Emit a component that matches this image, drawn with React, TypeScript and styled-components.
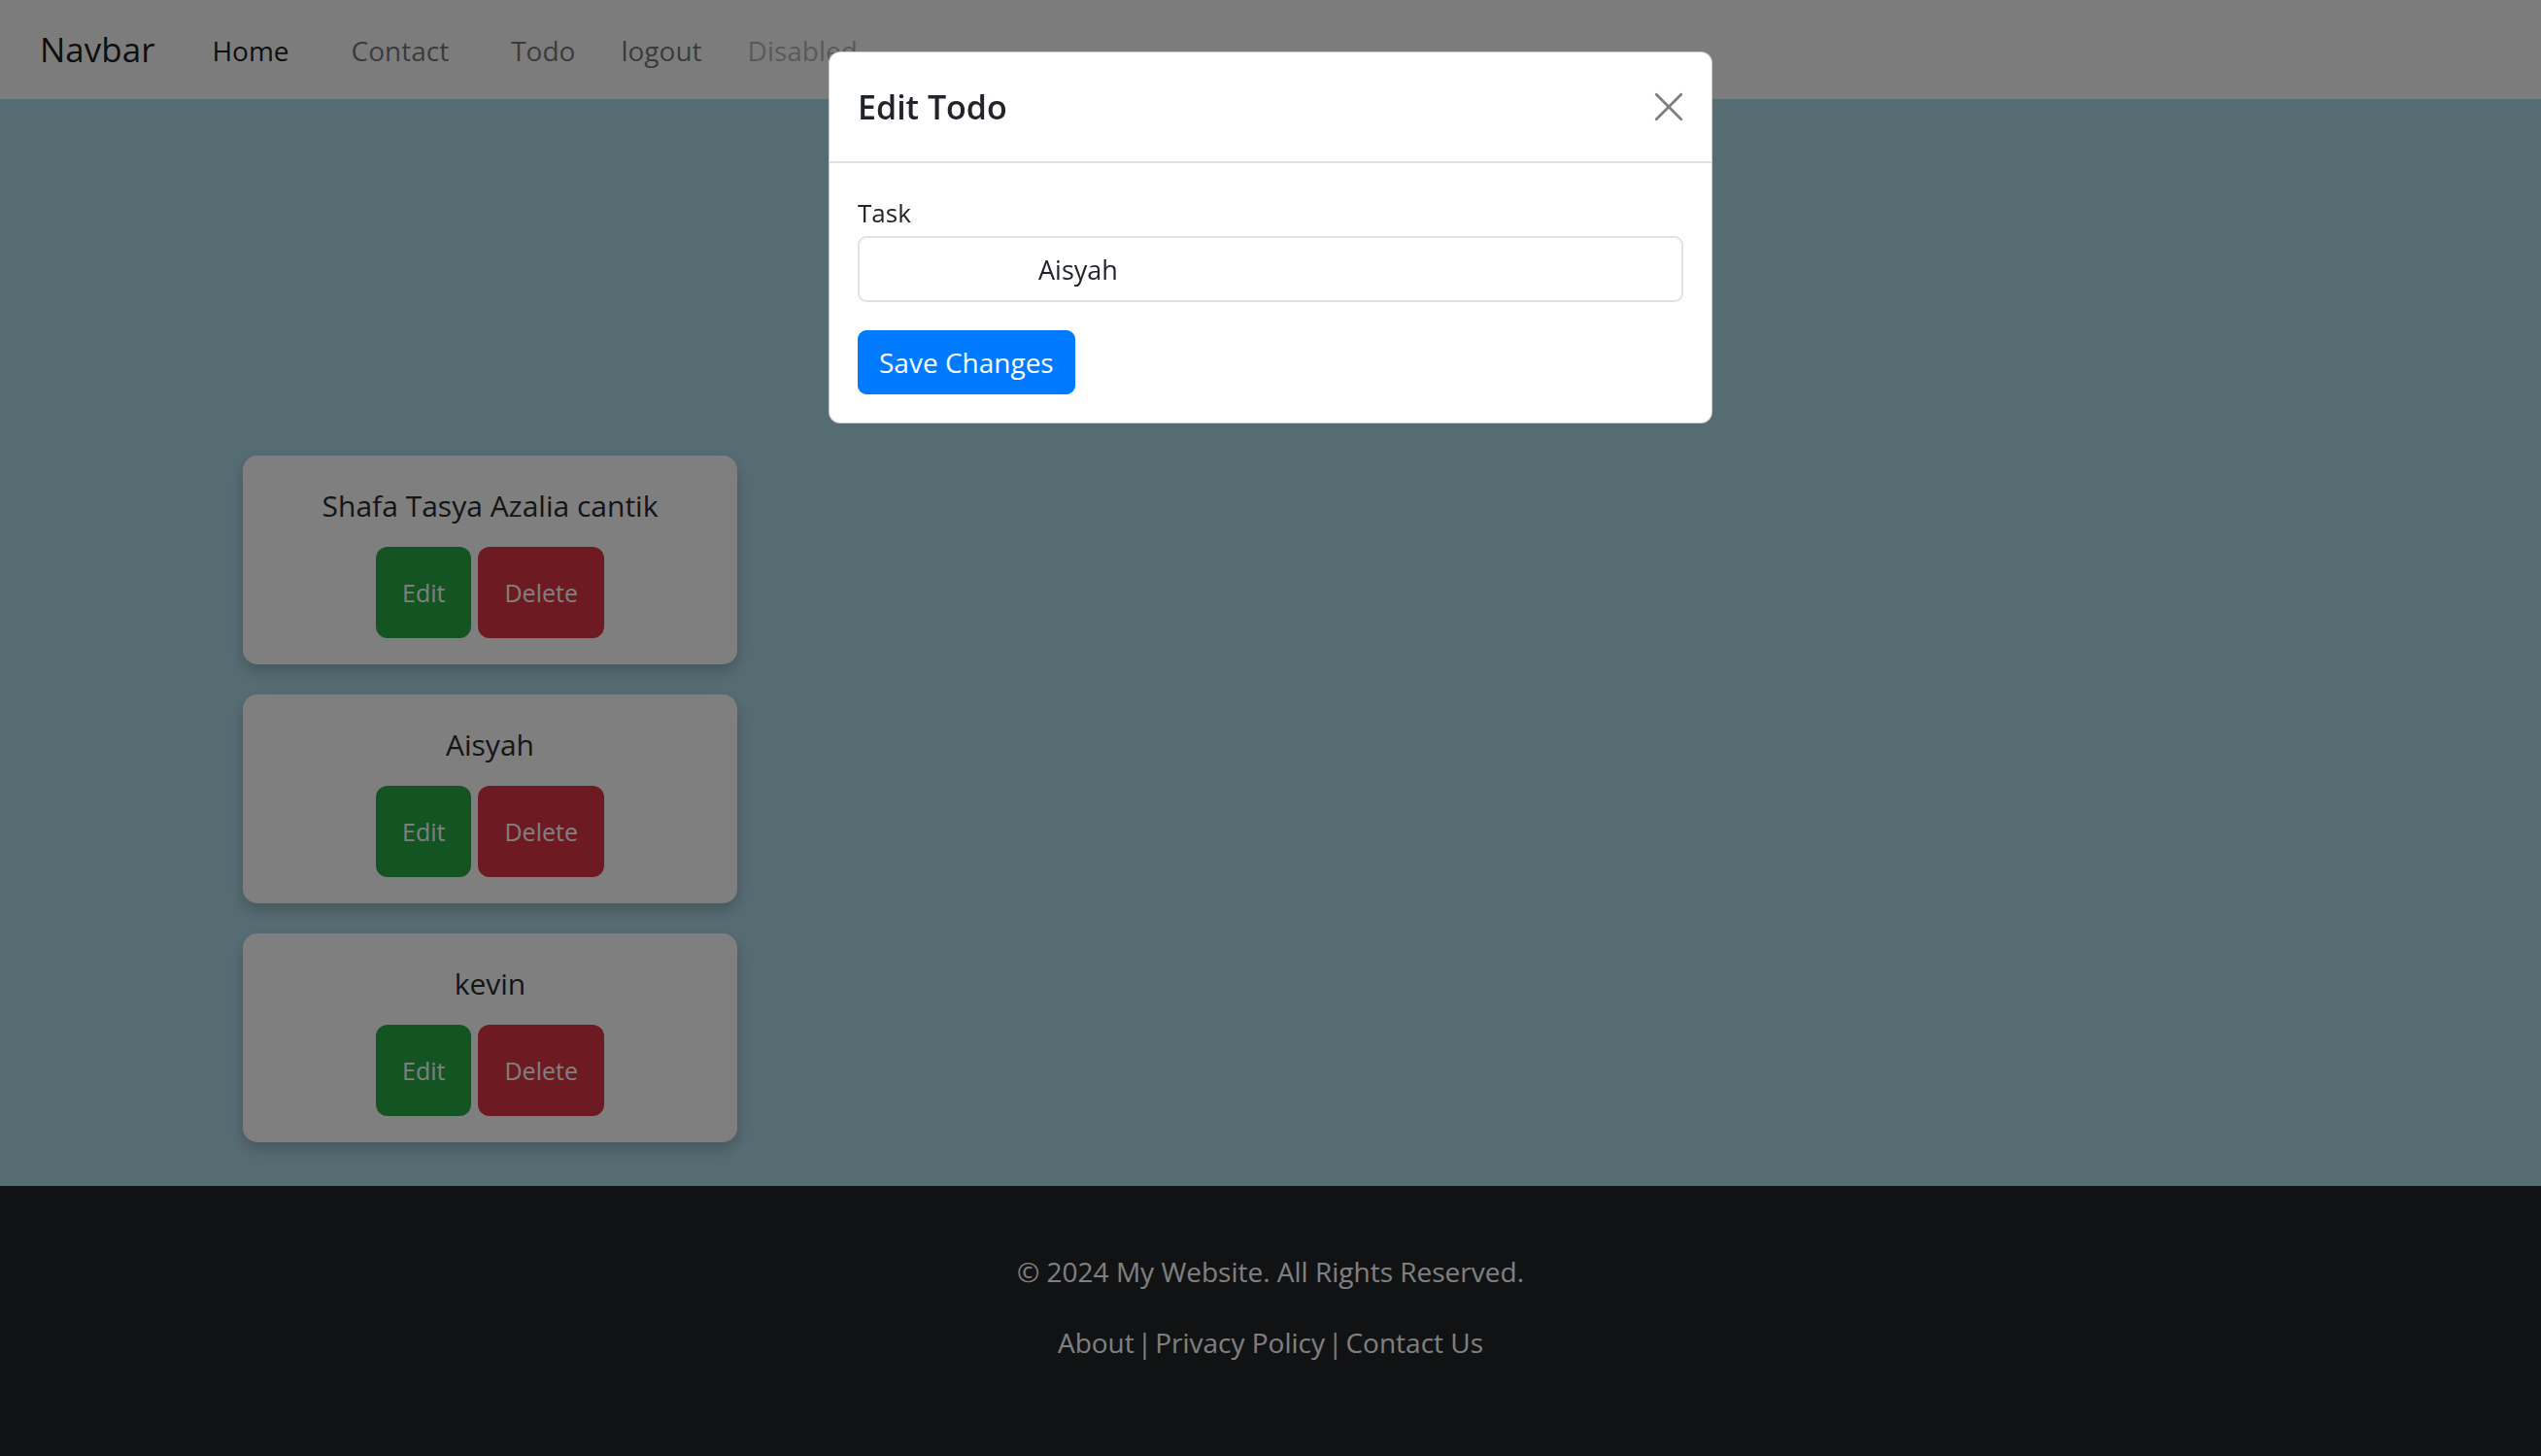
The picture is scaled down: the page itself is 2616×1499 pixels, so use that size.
import React from "react";
import styled, { createGlobalStyle } from "styled-components";

const GlobalStyle = createGlobalStyle`
  html, body { margin: 0; padding: 0; }
  body {
    font-family: "Open Sans", "Noto Sans", sans-serif;
    font-size: 28px;
    line-height: 1.5;
    color: #212529;
    background: #add8e6;
  }
  * { box-sizing: border-box; }
`;

const Page = styled.div`
  display: flex;
  flex-direction: column;
  min-height: 1499px;
`;

const NavBar = styled.nav`
  height: 102px;
  background: #f8f9fa;
  display: flex;
  align-items: center;
  padding: 1px 0 0 41px;
`;

const Brand = styled.a`
  font-size: 35px;
  color: rgba(0, 0, 0, 0.9);
  text-decoration: none;
  margin-right: 59px;
`;

type Tone = "active" | "normal" | "disabled";

const NavLink = styled.a<{ $tone: Tone; $space: number }>`
  font-size: 28px;
  text-decoration: none;
  margin-right: ${(p) => p.$space}px;
  color: ${(p) =>
    p.$tone === "active"
      ? "rgba(0,0,0,.9)"
      : p.$tone === "disabled"
      ? "rgba(0,0,0,.3)"
      : "rgba(0,0,0,.55)"};
`;

const Main = styled.main`
  flex: 1;
  background: #add8e6;
  padding: 367px 0 45px 250px;
  display: flex;
  flex-direction: column;
  gap: 31px;
`;

const Card = styled.div`
  width: 509px;
  background: #fff;
  border-radius: 15px;
  box-shadow: 0 7px 15px rgba(0, 0, 0, 0.2);
  padding: 29px 29px 27px;
  display: flex;
  flex-direction: column;
  align-items: center;
`;

const CardTitle = styled.div`
  font-size: 30px;
  line-height: 46px;
  color: #2a2a2a;
  margin-bottom: 19px;
`;

const Actions = styled.div`
  display: flex;
  gap: 7px;
`;

const ActionButton = styled.button<{ $variant: "edit" | "delete" }>`
  font-family: inherit;
  font-size: 25px;
  line-height: 44px;
  padding: 25px 27px;
  border: none;
  border-radius: 12px;
  color: #fff;
  background: ${(p) => (p.$variant === "edit" ? "#28a745" : "#dc3545")};
`;

const Footer = styled.footer`
  background: #212529;
  color: #fff;
  text-align: center;
  height: 278px;
  padding-top: 66px;
`;

const FooterLine = styled.p`
  margin: 0 0 29px;
  font-size: 28px;
  line-height: 44px;
`;

const FooterLink = styled.a`
  color: inherit;
  text-decoration: none;
`;

const Sep = styled.span`
  margin: 0 3px;
`;

const ModalLayer = styled.div`
  position: fixed;
  inset: 0;
  background: rgba(0, 0, 0, 0.5);
  display: flex;
  justify-content: center;
  align-items: flex-start;
  padding-top: 53px;
`;

const Dialog = styled.div`
  width: 910px;
  background: #fff;
  border: 1px solid rgba(0, 0, 0, 0.2);
  border-radius: 12px;
`;

const DialogHeader = styled.div`
  display: flex;
  align-items: center;
  justify-content: space-between;
  padding: 29px;
  border-bottom: 2px solid #dee2e6;
`;

const DialogTitle = styled.h5`
  margin: 0;
  font-size: 34px;
  line-height: 54px;
  font-weight: 600;
  color: #212529;
`;

const CloseButton = styled.button`
  width: 30px;
  height: 30px;
  padding: 0;
  border: none;
  background: transparent;
  display: flex;
  align-items: center;
  justify-content: center;
  opacity: 0.5;
`;

const DialogBody = styled.div`
  padding: 29px;
`;

const Label = styled.label`
  display: block;
  font-size: 26px;
  line-height: 44px;
  margin-bottom: 2px;
`;

const TextInput = styled.input`
  display: block;
  width: 100%;
  height: 68px;
  border: 2px solid #dee2e6;
  border-radius: 9px;
  padding: 0 20px 0 184px;
  font-family: inherit;
  font-size: 27px;
  color: #212529;
  background: #fff;
  outline: none;
`;

const PrimaryButton = styled.button`
  margin-top: 29px;
  font-family: inherit;
  font-size: 28px;
  line-height: 44px;
  padding: 10px 21px;
  border: 1px solid #007bff;
  border-radius: 9px;
  background: #007bff;
  color: #fff;
`;

const todos = ["Shafa Tasya Azalia cantik", "Aisyah", "kevin"];

export default function App() {
  return (
    <>
      <GlobalStyle />
      <Page>
        <NavBar>
          <Brand href="#">Navbar</Brand>
          <NavLink href="#" $tone="active" $space={64}>Home</NavLink>
          <NavLink href="#" $tone="normal" $space={64}>Contact</NavLink>
          <NavLink href="#" $tone="normal" $space={47}>Todo</NavLink>
          <NavLink href="#" $tone="normal" $space={47}>logout</NavLink>
          <NavLink href="#" $tone="disabled" $space={0}>Disabled</NavLink>
        </NavBar>
        <Main>
          {todos.map((t) => (
            <Card key={t}>
              <CardTitle>{t}</CardTitle>
              <Actions>
                <ActionButton $variant="edit">Edit</ActionButton>
                <ActionButton $variant="delete">Delete</ActionButton>
              </Actions>
            </Card>
          ))}
        </Main>
        <Footer>
          <FooterLine>© 2024 My Website. All Rights Reserved.</FooterLine>
          <FooterLine>
            <FooterLink href="#">About</FooterLink>
            <Sep>|</Sep>
            <FooterLink href="#">Privacy Policy</FooterLink>
            <Sep>|</Sep>
            <FooterLink href="#">Contact Us</FooterLink>
          </FooterLine>
        </Footer>
      </Page>
      <ModalLayer>
        <Dialog>
          <DialogHeader>
            <DialogTitle>Edit Todo</DialogTitle>
            <CloseButton aria-label="Close">
              <svg width="30" height="30" viewBox="0 0 16 16">
                <path d="M1.2 1.2 L14.8 14.8 M14.8 1.2 L1.2 14.8" stroke="#000" strokeWidth="1.5" strokeLinecap="round" />
              </svg>
            </CloseButton>
          </DialogHeader>
          <DialogBody>
            <Label>Task</Label>
            <TextInput defaultValue="Aisyah" />
            <PrimaryButton>Save Changes</PrimaryButton>
          </DialogBody>
        </Dialog>
      </ModalLayer>
    </>
  );
}
